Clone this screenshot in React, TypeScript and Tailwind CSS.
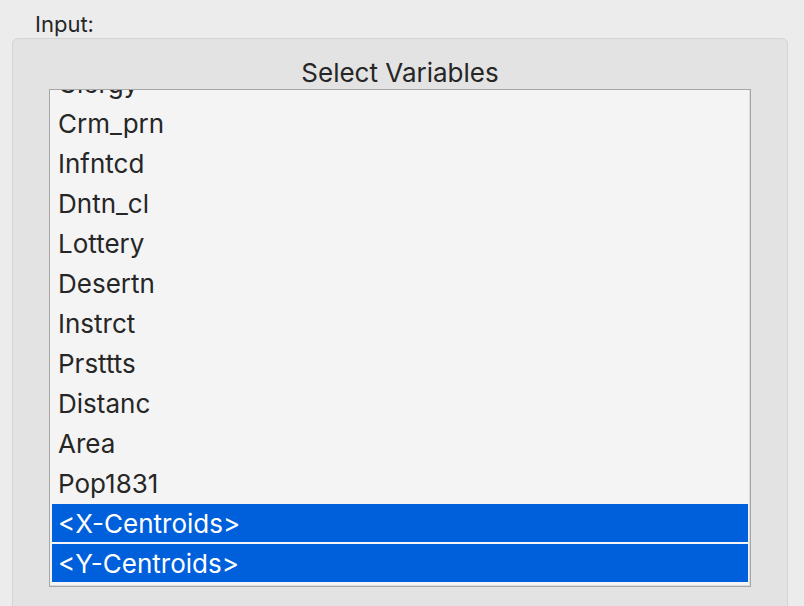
const variables = [
  "Clergy",
  "Crm_prn",
  "Infntcd",
  "Dntn_cl",
  "Lottery",
  "Desertn",
  "Instrct",
  "Prsttts",
  "Distanc",
  "Area",
  "Pop1831",
  "<X-Centroids>",
  "<Y-Centroids>",
];

const selected = new Set(["<X-Centroids>", "<Y-Centroids>"]);

export default function App() {
  return (
    <main
      className="w-[804px] h-[606px] overflow-hidden bg-[#ececec] text-[#262626]"
      style={{ fontFamily: "Inter, 'Liberation Sans', sans-serif" }}
    >
      {/* ── LABEL ────────────────────────────────────────────────── */}
      <div className="pt-[10px] pl-[35px] text-[22px] leading-[28px]">Input:</div>

      {/* ── PANEL ────────────────────────────────────────────────── */}
      <section className="ml-3 mr-4 h-[600px] rounded-md border border-[#d4d4d4] bg-[#e3e3e3] px-9 pt-[18px]">
        <h2 className="h-8 text-center text-[26px] leading-[32px] font-normal">Select Variables</h2>

        <div className="h-[498px] overflow-hidden border border-[#a6a6a6] bg-[#f4f4f4] shadow-[inset_-1px_-1px_0_#dcdcdc] flex flex-col justify-end px-[2px] pb-[3px]">
          {variables.map((v) => (
            <div key={v} className="h-10 shrink-0 py-px">
              <div
                className={
                  selected.has(v)
                    ? "h-[38px] bg-[#0060db] text-white pl-[6px] text-[26px] leading-[40px]"
                    : "h-[38px] pl-[6px] text-[26px] leading-[40px]"
                }
              >
                {v}
              </div>
            </div>
          ))}
        </div>
      </section>
    </main>
  );
}
